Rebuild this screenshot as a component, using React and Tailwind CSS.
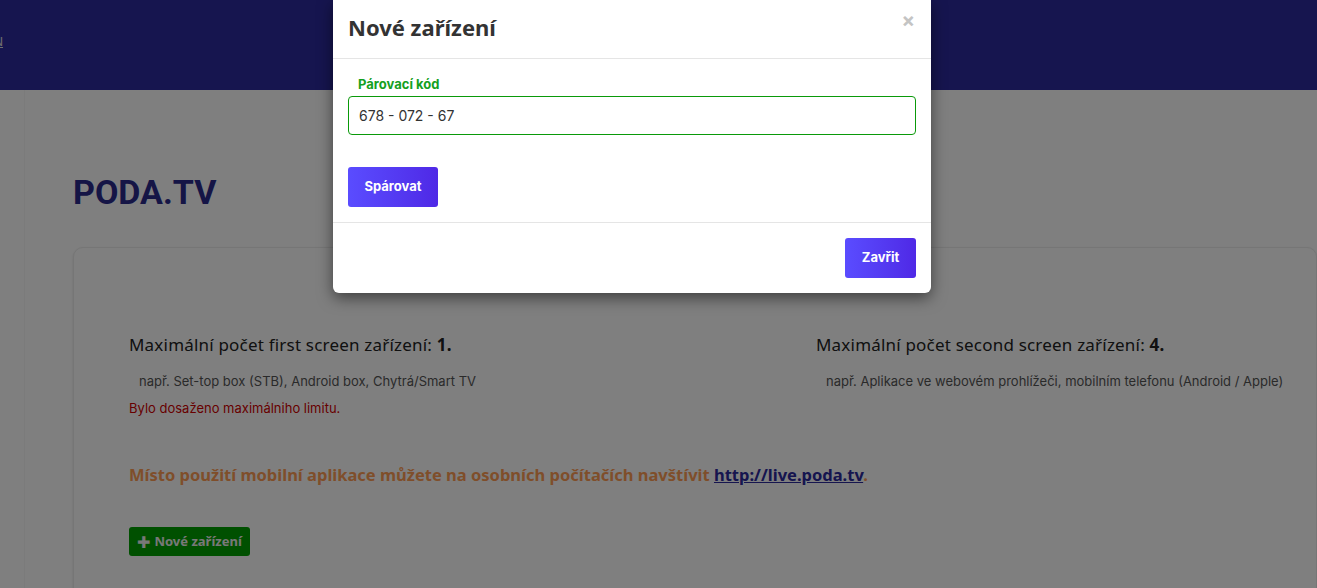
import React from "react";

const grotesk = { fontFamily: "'Noto Sans', 'DejaVu Sans', sans-serif" };

function DeviceLimit({ title, count, hint, warning, className }) {
  return (
    <div className={className}>
      <p className="text-[17px] text-[#222] tracking-[0.2px]" style={grotesk}>
        {title} <span className="font-bold">{count}.</span>
      </p>
      <p className="mt-[14px] pl-[10px] text-[13px] text-[#555]">{hint}</p>
      {warning && <p className="mt-[8px] text-[13px] text-[#d00000]">{warning}</p>}
    </div>
  );
}

export default function App() {
  return (
    <div className="relative h-[588px] w-[1317px] overflow-hidden bg-white font-['Inter',sans-serif]">
      {/* HEADER */}
      <div className="h-[90px] bg-[#2c2a9e] flex items-center">
        <a className="-ml-[6px] mt-[-6px] text-[12px] text-[#ddd] underline">N</a>
      </div>

      {/* PAGE */}
      <div className="ml-[24px] pl-[48px] border-l border-[#f6f6f6] h-[498px]">
        <h1 className="pt-[80px] text-[34px] leading-[44px] font-bold text-[#2b2a8c] font-['Roboto',sans-serif]">
          PODA.TV
        </h1>
        <div className="mt-[33px] rounded-[10px] border border-[#ececec] bg-white shadow-sm pl-[55px] pt-[84px] h-[400px]">
          <div className="flex">
            <DeviceLimit
              className="w-[687px] shrink-0"
              title="Maximální počet first screen zařízení:"
              count="1"
              hint="např. Set-top box (STB), Android box, Chytrá/Smart TV"
              warning="Bylo dosaženo maximálniho limitu."
            />
            <DeviceLimit
              className="flex-1"
              title="Maximální počet second screen zařízení:"
              count="4"
              hint="např. Aplikace ve webovém prohlížeči, mobilním telefonu (Android / Apple)"
            />
          </div>
          <p className="mt-[44px] text-[16.5px] font-bold text-[#ff9d55]" style={grotesk}>
            Místo použití mobilní aplikace můžete na osobních počítačích navštívit{" "}
            <a className="text-[#2c2a9e] underline">http://live.poda.tv</a>.
          </p>
          <button className="mt-[40px] flex items-center gap-[4px] rounded-[3px] bg-[#00a000] px-[8px] h-[29px] text-[13px] font-bold text-[#f0f0f0]" style={grotesk}>
            <span className="text-[16px] leading-none">✚</span> Nové zařízení
          </button>
        </div>
      </div>

      {/* BACKDROP */}
      <div className="absolute inset-0 bg-black/50" />

      {/* MODAL */}
      <div className="absolute left-[333px] top-0 w-[598px] rounded-b-[6px] bg-white shadow-[0_5px_15px_rgba(0,0,0,0.5)]">
        <div className="flex items-start justify-between h-[59px] border-b border-[#e5e5e5] px-[15px]">
          <h2 className="mt-[11px] text-[22px] font-bold text-[#333]" style={grotesk}>Nové zařízení</h2>
          <span className="mt-[5px] mr-[1px] text-[20px] font-bold text-[#c4c4c4]">×</span>
        </div>
        <div className="px-[15px] pt-[16px] pb-[15px] border-b border-[#e5e5e5]">
          <label className="block pl-[10px] text-[13px] font-bold text-[#14a01e]">Párovací kód</label>
          <div className="mt-[1px] h-[39px] rounded-[4px] border border-[#0a9a0a] flex items-center px-[10px] text-[14px] text-[#333]">
            678 - 072 - 67
          </div>
          <button className="mt-[32px] h-[40px] w-[90px] rounded-[3px] bg-gradient-to-r from-[#5a4cff] to-[#4f28e6] text-[13px] font-bold text-white">
            Spárovat
          </button>
        </div>
        <div className="flex justify-end px-[15px] pt-[15px] pb-[15px]">
          <button className="h-[40px] w-[71px] rounded-[3px] bg-gradient-to-r from-[#5a4cff] to-[#4f28e6] text-[13px] font-bold text-white">
            Zavřit
          </button>
        </div>
      </div>
    </div>
  );
}
